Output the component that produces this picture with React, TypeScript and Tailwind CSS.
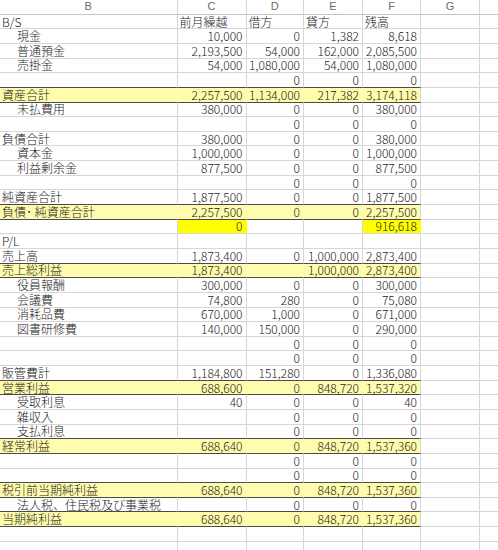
import React from "react";

type Row = {
  label?: string;
  ind?: boolean;
  c?: string;
  d?: string;
  e?: string;
  f?: string;
  y?: boolean;
  hl?: boolean;
  left?: boolean;
};

const rows: Row[] = [
  { label: "B/S", c: "前月繰越", d: "借方", e: "貸方", f: "残高", left: true },
  { label: "現金", ind: true, c: "10,000", d: "0", e: "1,382", f: "8,618" },
  { label: "普通預金", ind: true, c: "2,193,500", d: "54,000", e: "162,000", f: "2,085,500" },
  { label: "売掛金", ind: true, c: "54,000", d: "1,080,000", e: "54,000", f: "1,080,000" },
  { d: "0", e: "0", f: "0" },
  { label: "資産合計", y: true, c: "2,257,500", d: "1,134,000", e: "217,382", f: "3,174,118" },
  { label: "未払費用", ind: true, c: "380,000", d: "0", e: "0", f: "380,000" },
  { d: "0", e: "0", f: "0" },
  { label: "負債合計", c: "380,000", d: "0", e: "0", f: "380,000" },
  { label: "資本金", ind: true, c: "1,000,000", d: "0", e: "0", f: "1,000,000" },
  { label: "利益剰余金", ind: true, c: "877,500", d: "0", e: "0", f: "877,500" },
  { d: "0", e: "0", f: "0" },
  { label: "純資産合計", c: "1,877,500", d: "0", e: "0", f: "1,877,500" },
  { label: "負債･ 純資産合計", y: true, c: "2,257,500", d: "0", e: "0", f: "2,257,500" },
  { c: "0", f: "916,618", hl: true },
  { label: "P/L" },
  { label: "売上高", c: "1,873,400", d: "0", e: "1,000,000", f: "2,873,400" },
  { label: "売上総利益", y: true, c: "1,873,400", e: "1,000,000", f: "2,873,400" },
  { label: "役員報酬", ind: true, c: "300,000", d: "0", e: "0", f: "300,000" },
  { label: "会議費", ind: true, c: "74,800", d: "280", e: "0", f: "75,080" },
  { label: "消耗品費", ind: true, c: "670,000", d: "1,000", e: "0", f: "671,000" },
  { label: "図書研修費", ind: true, c: "140,000", d: "150,000", e: "0", f: "290,000" },
  { d: "0", e: "0", f: "0" },
  { d: "0", e: "0", f: "0" },
  { label: "販管費計", c: "1,184,800", d: "151,280", e: "0", f: "1,336,080" },
  { label: "営業利益", y: true, c: "688,600", d: "0", e: "848,720", f: "1,537,320" },
  { label: "受取利息", ind: true, c: "40", d: "0", e: "0", f: "40" },
  { label: "雑収入", ind: true, d: "0", e: "0", f: "0" },
  { label: "支払利息", ind: true, d: "0", e: "0", f: "0" },
  { label: "経常利益", y: true, c: "688,640", d: "0", e: "848,720", f: "1,537,360" },
  { d: "0", e: "0", f: "0" },
  { d: "0", e: "0", f: "0" },
  { label: "税引前当期純利益", y: true, c: "688,640", d: "0", e: "848,720", f: "1,537,360" },
  { label: "法人税、住民税及び事業税", ind: true, d: "0", e: "0", f: "0" },
  { label: "当期純利益", y: true, c: "688,640", d: "0", e: "848,720", f: "1,537,360" },
  {},
  {},
];

const widths = ["w-[177.5px]", "w-[69px]", "w-[57.5px]", "w-[59px]", "w-[58px]", "w-[59px]"];

function Cell({
  w,
  dark,
  fill,
  rightFill,
  align,
  text,
  ind,
}: {
  w: string;
  dark: boolean;
  fill: "none" | "pale" | "bright";
  rightFill: boolean;
  align: "left" | "right";
  text?: string;
  ind?: boolean;
}) {
  const bg = fill === "pale" ? "bg-[#fffcae]" : fill === "bright" ? "bg-[#ffff00]" : "bg-white";
  const br = rightFill
    ? fill === "bright"
      ? "border-r-[#ffff00]"
      : "border-r-[#fffcae]"
    : "border-r-[#d6d6d6]";
  const bb = dark ? "border-b-[1.5px] border-b-[#4a4a4a]" : "border-b border-b-[#d6d6d6]";
  return (
    <div
      className={`${w} shrink-0 h-full border-r ${br} ${bb} ${bg} flex items-center overflow-visible whitespace-nowrap ${
        align === "right" ? "justify-end pr-[3px]" : ind ? "pl-[17px]" : "pl-[2px]"
      }`}
    >
      <span className="leading-[12px] -translate-y-[0.5px]">{text ?? ""}</span>
    </div>
  );
}

export default function App() {
  return (
    <div className="w-[498px] h-[550px] overflow-hidden bg-white text-[12px] font-light text-[#1a1a1a] font-['Noto_Sans_CJK_JP','Noto_Sans',sans-serif]">
      <div className="flex h-[14.7px] border-b border-b-[#c4c4c4] text-[11px] font-normal text-[#6a6a6a] font-['Liberation_Sans',sans-serif]">
        {["B", "C", "D", "E", "F", "G"].map((l, i) => (
          <div key={l} className={`${widths[i]} shrink-0 h-full border-r border-r-[#d6d6d6] flex items-center justify-center leading-none`}>
            {l}
          </div>
        ))}
        <div className="flex-1" />
      </div>
      {rows.map((r, i) => {
        const next = rows[i + 1];
        const dark = !!r.y || !!(next && next.y);
        const vals = [r.c, r.d, r.e, r.f];
        return (
          <div key={i} className="flex h-[14.65px]">
            <Cell w={widths[0]} dark={dark} fill={r.y ? "pale" : "none"} rightFill={!!r.y} align="left" text={r.label} ind={r.ind} />
            {vals.map((v, j) => {
              const bright = r.hl && (j === 0 || j === 3);
              const fill = r.y ? "pale" : bright ? "bright" : "none";
              return (
                <Cell
                  key={j}
                  w={widths[j + 1]}
                  dark={dark}
                  fill={fill}
                  rightFill={(!!r.y && j < 3) || !!bright}
                  align={r.left ? "left" : "right"}
                  text={v}
                />
              );
            })}
            <Cell w={widths[5]} dark={false} fill="none" rightFill={false} align="left" />
            <div className="flex-1 h-full border-b border-b-[#d6d6d6]" />
          </div>
        );
      })}
    </div>
  );
}
